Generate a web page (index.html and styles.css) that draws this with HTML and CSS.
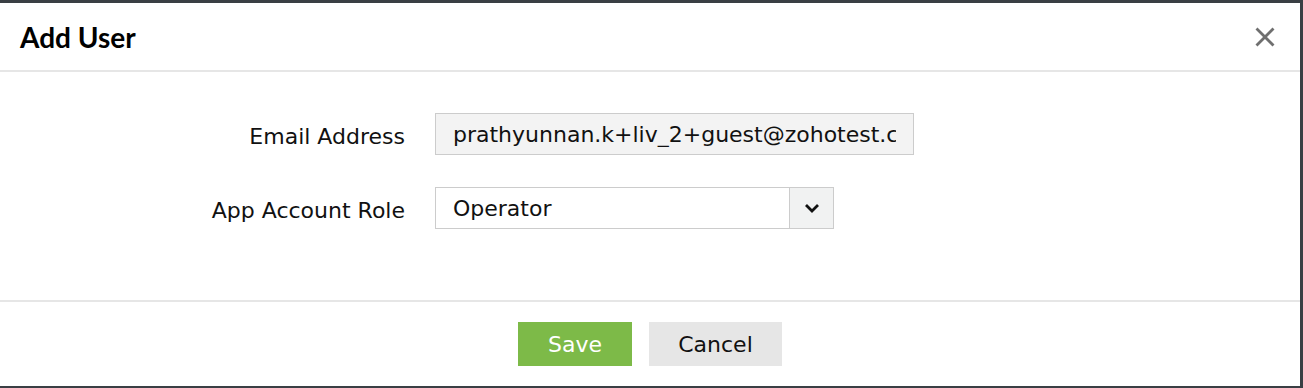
FILE: index.html
```html
<!DOCTYPE html>
<html lang="en">
<head>
    <meta charset="UTF-8">
    <meta name="viewport" content="width=device-width, initial-scale=1.0">
    <title>Add User</title>
    <link rel="stylesheet" href="styles.css">
</head>
<body>
    <div class="dialog">
        <div class="dialog-header">
            <h1 class="dialog-title">Add User</h1>
            <button class="close-btn" aria-label="Close">
                <svg width="20" height="20" viewBox="0 0 20 20">
                    <path d="M1.5 1.5 L18.5 18.5 M18.5 1.5 L1.5 18.5" stroke="#6f6f6f" stroke-width="2.8" fill="none"/>
                </svg>
            </button>
        </div>

        <div class="dialog-body">
            <label class="field-label" for="email">Email Address</label>
            <div class="field">
                <input class="text-input" id="email" type="text" value="prathyunnan.k+liv_2+guest@zohotest.com" readonly>
            </div>

            <label class="field-label" for="role">App Account Role</label>
            <div class="field">
                <div class="select-box" id="role">
                    <span class="select-value">Operator</span>
                    <span class="select-arrow">
                        <svg width="16" height="10" viewBox="0 0 16 10">
                            <path d="M2 2 L8 8 L14 2" stroke="#111" stroke-width="2.8" fill="none"/>
                        </svg>
                    </span>
                </div>
            </div>
        </div>

        <div class="dialog-footer">
            <button class="btn btn-save">Save</button>
            <button class="btn btn-cancel">Cancel</button>
        </div>
    </div>
</body>
</html>
```

FILE: styles.css
```css
body {
    margin: 0;
    background-color: #ffffff;
    font-family: "DejaVu Sans", Verdana, sans-serif;
    color: #111;
}
.dialog {
    border-top: 3px solid #3a3f44;
    border-right: 3px solid #3a3f44;
    border-bottom: 2px solid #3a3f44;
    background: white;
}
.dialog-header {
    height: 67px;
    display: flex;
    align-items: center;
    justify-content: space-between;
    padding: 0 25px 0 20px;
    border-bottom: 2px solid #e6e6e6;
}
.dialog-title {
    margin: 0;
    font-family: Lato, "Liberation Sans", sans-serif;
    font-weight: 700;
    font-size: 28px;
    color: #000;
}
.close-btn {
    background: none;
    border: none;
    padding: 0;
    display: flex;
    cursor: pointer;
}
.dialog-body {
    display: grid;
    grid-template-columns: 405px auto;
    column-gap: 30px;
    row-gap: 32px;
    align-items: center;
    padding: 41px 0 71px;
    border-bottom: 2px solid #e6e6e6;
}
.field-label {
    text-align: right;
    font-size: 22px;
    padding-top: 4px;
}
.field {
    display: flex;
}
.text-input {
    width: 479px;
    height: 42px;
    box-sizing: border-box;
    border: 1px solid #cccccc;
    background: #f3f3f3;
    padding: 0 17px;
    font-family: "DejaVu Sans", Verdana, sans-serif;
    font-size: 22px;
    color: #111;
    outline: none;
}
.select-box {
    width: 399px;
    height: 42px;
    box-sizing: border-box;
    border: 1px solid #cccccc;
    display: flex;
    align-items: stretch;
}
.select-value {
    flex: 1;
    display: flex;
    align-items: center;
    padding-left: 17px;
    font-size: 22px;
}
.select-arrow {
    width: 43px;
    border-left: 1px solid #cccccc;
    background: #f1f2f2;
    display: flex;
    align-items: center;
    justify-content: center;
}
.dialog-footer {
    display: flex;
    justify-content: center;
    gap: 17px;
    padding: 20px 0;
}
.btn {
    height: 44px;
    border: none;
    font-family: "DejaVu Sans", Verdana, sans-serif;
    font-size: 22px;
    cursor: pointer;
}
.btn-save {
    width: 114px;
    background-color: #7dba48;
    color: white;
}
.btn-cancel {
    width: 133px;
    background-color: #e6e6e6;
    color: #111;
}
```
